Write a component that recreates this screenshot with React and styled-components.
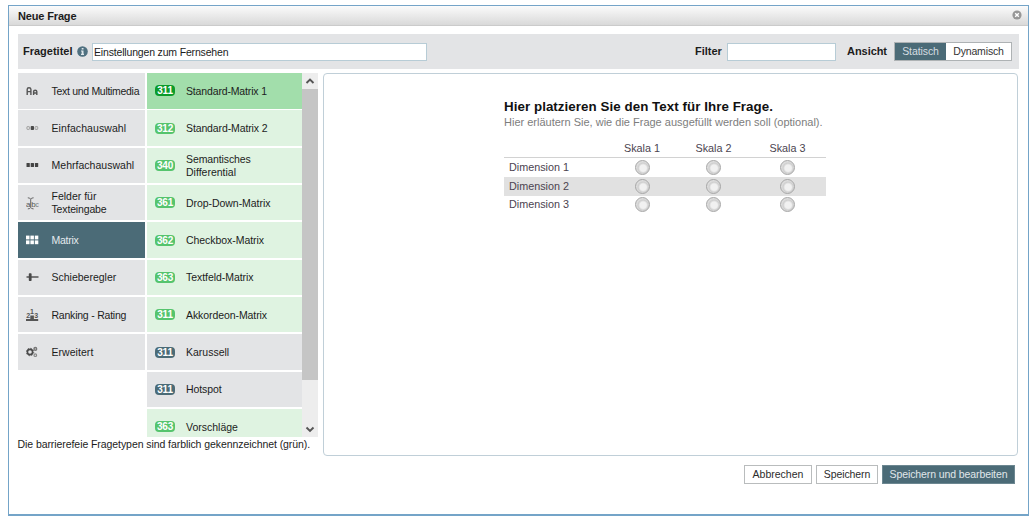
import React from "react";
import styled, { createGlobalStyle } from "styled-components";

const Global = createGlobalStyle`
  * { box-sizing: border-box; }
  body {
    margin: 0;
    background: #fff;
    color: #1c1c1c;
    font: 10.5px/13px "Liberation Sans", Arial, sans-serif;
  }
  button, input { font: inherit; color: inherit; margin: 0; }
`;

const Page = styled.div`
  width: 1036px;
  height: 524px;
  padding: 5px 7px 8px 8px;
`;
const Dialog = styled.section`
  height: 511px;
  border: 1px solid #74a4c8;
  border-bottom-width: 2px;
  background: #fff;
`;
const TitleBar = styled.header`
  height: 20px;
  padding: 0 6px 0 9px;
  display: flex;
  align-items: center;
  justify-content: space-between;
  border-bottom: 1px solid #cbcbcb;
  background: linear-gradient(#fbfbfb, #d9d9d9);
`;
const Title = styled.h1`
  margin: 2px 0 0;
  font-size: 11px;
  line-height: 13px;
  letter-spacing: -0.15px;
`;
const Close = styled.button`
  width: 10px;
  height: 10px;
  margin-bottom: 1px;
  padding: 0;
  border: 0;
  background: none;
  display: flex;
`;
const Body = styled.div`
  padding: 8px 9px 0 9px;
`;
const Toolbar = styled.div`
  height: 35px;
  padding: 0 7px 0 5px;
  display: flex;
  align-items: center;
  background: #e3e4e6;
`;
const FieldLabel = styled.label`
  font-size: 11px;
  font-weight: bold;
  width: ${(p) => p.$w}px;
  margin-left: ${(p) => p.$ml || 0}px;
  letter-spacing: ${(p) => p.$ls || 0}px;
`;
const Field = styled.input`
  width: ${(p) => p.$w}px;
  height: 18px;
  padding: 0 1px;
  border: 1px solid #b7ccd6;
  background: #fff;
  outline: 0;
  letter-spacing: -0.17px;
`;
const Info = styled.svg`
  width: 11px;
  height: 11px;
  margin-right: 4px;
`;
const Toggle = styled.div`
  display: flex;
  height: 19px;
  border: 1px solid #aeb2b4;
`;
const ToggleButton = styled.button`
  width: ${(p) => p.$w}px;
  padding: 0;
  border: 0;
  letter-spacing: ${(p) => p.$ls}px;
  background: ${(p) => (p.$on ? "#4b6b77" : "#fff")};
  color: ${(p) => (p.$on ? "#d5dde1" : "#333")};
`;
const Main = styled.div`
  display: flex;
  margin-top: 4px;
`;
const Browser = styled.div`
  width: 305px;
`;
const Lists = styled.div`
  display: flex;
  height: 364px;
`;
const List = styled.div`
  width: ${(p) => p.$w}px;
  margin-right: ${(p) => p.$mr || 0}px;
  height: 364px;
  overflow: hidden;
`;
const tones = {
  grey: "#e3e4e6",
  dark: "#4b6b77",
  green: "#dff3e1",
  active: "#a2deab",
};
const Item = styled.div`
  height: 35.5px;
  margin-bottom: 1.83px;
  padding-left: 8px;
  display: flex;
  align-items: center;
  background: ${(p) => tones[p.$tone]};
  color: ${(p) => (p.$tone === "dark" ? "#e4eaed" : "#1c1c1c")};
`;
const IconBox = styled.span`
  width: 25.5px;
  height: 14px;
  display: flex;
`;
const Label = styled.span`
  white-space: nowrap;
  padding-top: 1px;
`;
const Line = styled.span`
  display: block;
  letter-spacing: ${(p) => p.$ls}px;
`;
const Badge = styled.span`
  width: 20px;
  height: 11px;
  margin-right: 11px;
  border-radius: 4px;
  background: ${(p) => p.$c};
  color: #fff;
  font-size: 10px;
  font-weight: bold;
  line-height: 11px;
  letter-spacing: -0.2px;
  text-align: center;
`;
const Scrollbar = styled.div`
  width: 16px;
  height: 364px;
  display: flex;
  flex-direction: column;
  justify-content: space-between;
  background: #ededed;
`;
const Arrow = styled.svg`
  width: 16px;
  height: 16px;
  display: block;
`;
const Thumb = styled.div`
  height: 291px;
  margin-bottom: 41px;
  background: #c5c5c5;
`;
const Note = styled.p`
  margin: 1px 0 0 -0.5px;
  white-space: nowrap;
  letter-spacing: -0.07px;
`;
const Preview = styled.section`
  width: 695px;
  height: 383px;
  padding: 25px 0 0 180px;
  border: 1px solid #c0cfd8;
  border-radius: 4px;
`;
const Question = styled.h2`
  margin: 0;
  font-size: 13.33px;
  line-height: 16px;
  letter-spacing: 0.06px;
  color: #111;
  white-space: nowrap;
`;
const Hint = styled.p`
  margin: 0;
  font-size: 11px;
  line-height: 14px;
  color: #7d7d7d;
  white-space: nowrap;
`;
const Grid = styled.div`
  margin-top: 11px;
  width: 322px;
  font-size: 10.8px;
  color: #4b4450;
`;
const GridRow = styled.div`
  display: grid;
  grid-template-columns: 102px 72px 71px 77px;
  align-items: center;
  justify-items: center;
  height: ${(p) => (p.$head ? 18.4 : 18.6)}px;
  border-bottom: ${(p) => (p.$head ? "1px solid #d2d2d2" : "0")};
  background: ${(p) => (p.$shade ? "#e1e1e1" : "none")};
`;
const RowName = styled.span`
  justify-self: start;
  padding-left: 5px;
`;
const Radio = styled.span`
  width: 15px;
  height: 15px;
  border: 1px solid #a6a6a6;
  border-radius: 50%;
  background: radial-gradient(circle at 55% 55%, #f1f1f1 0 3.2px, #cfcfcf 5px, #dedede 6.5px);
`;
const Footer = styled.footer`
  display: flex;
  justify-content: flex-end;
  gap: 4px;
  margin: 9px 4px 0 0;
`;
const Button = styled.button`
  width: ${(p) => p.$w}px;
  height: 19px;
  padding: 0;
  font-size: 10.5px;
  white-space: nowrap;
  letter-spacing: ${(p) => p.$ls || 0}px;
  border: 1px solid ${(p) => (p.$primary ? "#6c8791" : "#b9bcbd")};
  background: ${(p) => (p.$primary ? "#4b6b77" : "#fff")};
  color: ${(p) => (p.$primary ? "#e0e7ea" : "#2b2b2b")};
`;

const iconFont = { fontFamily: "Liberation Sans", fontWeight: "bold" };

const icons = {
  text: (
    <svg width="14" height="14" fill="none" stroke="#555" strokeWidth="1.4">
      <path d="M1.2 11V5.2Q1.2 3.7 3 3.7T4.9 5.2V11M1.2 7.6h3.7" />
      <path d="M7.6 11V7.6Q7.6 6.3 9.2 6.3T10.8 7.6V11M7.6 9h3.2" />
    </svg>
  ),
  single: (
    <svg width="14" height="14">
      <g fill="#d8d8d8" stroke="#999" strokeWidth="0.9">
        <rect x="0.9" y="5.5" width="2.6" height="3" rx="0.8" />
        <rect x="9.1" y="5.5" width="2.6" height="3" rx="0.8" />
      </g>
      <rect x="4.7" y="5" width="3.3" height="4" rx="0.8" fill="#4a4a4a" />
    </svg>
  ),
  multi: (
    <svg width="14" height="14" fill="#444">
      <rect x="0.5" y="5.1" width="3.3" height="3.8" rx="0.5" />
      <rect x="4.7" y="5.1" width="3.3" height="3.8" rx="0.5" />
      <rect x="8.9" y="5.1" width="3.3" height="3.8" rx="0.5" />
    </svg>
  ),
  field: (
    <svg width="14" height="14" fill="#555" fontFamily="Liberation Sans">
      <text x="0" y="10.5" fontSize="8">a</text>
      <text x="5.2" y="10.5" fontSize="8">b</text>
      <text x="9.4" y="10.5" fontSize="6.5" fill="#777">c</text>
      <path
        d="M1.8 1.8q2.4 0 2.9 1.4Q5.2 1.8 7.6 1.8M4.7 3.2v8.2M1.8 12.9q2.4 0 2.9-1.4q.5 1.4 2.9 1.4"
        stroke="#666"
        fill="none"
        strokeWidth="1"
      />
    </svg>
  ),
  matrix: (
    <svg width="14" height="14" fill="#fff">
      {[0, 4.4, 8.8].map((x) =>
        [2.6, 7.4].map((y) => <rect key={x + "-" + y} x={x} y={y} width="3.5" height="3.8" />)
      )}
    </svg>
  ),
  slider: (
    <svg width="14" height="14">
      <path d="M0.5 7h12" stroke="#555" strokeWidth="1.5" />
      <rect x="2.8" y="3.2" width="2.8" height="7.8" rx="0.8" fill="#484848" />
    </svg>
  ),
  ranking: (
    <svg width="14" height="14" fill="#555" {...iconFont}>
      <path d="M0 10.9h4.3V7.6h3.6v3.3h4.3V13H0z" fill="#555" />
      <text x="0.2" y="10" fontSize="7">2</text>
      <text x="4" y="6.4" fontSize="7">1</text>
      <text x="8.3" y="10" fontSize="7">3</text>
    </svg>
  ),
  gears: (
    <svg width="14" height="14" fill="none" stroke="#4a4a4a">
      <circle cx="4" cy="7" r="2.6" strokeWidth="1.6" />
      <circle cx="4" cy="7" r="3.7" strokeWidth="0.9" strokeDasharray="1.4 1.5" />
      <circle cx="9.3" cy="3.9" r="1.3" strokeWidth="1.5" stroke="#777" />
      <circle cx="9.3" cy="10.2" r="1.3" strokeWidth="1.2" stroke="#888" />
    </svg>
  ),
};

const categories = [
  ["text", [["Text und Multimedia", -0.3]]],
  ["single", [["Einfachauswahl", 0.08]]],
  ["multi", [["Mehrfachauswahl", 0.02]]],
  ["field", [["Felder für", 0], ["Texteingabe", -0.15]]],
  ["matrix", [["Matrix", -0.25]]],
  ["slider", [["Schieberegler", 0]]],
  ["ranking", [["Ranking - Rating", -0.22]]],
  ["gears", [["Erweitert", 0.05]]],
];
const types = [
  [311, "active", [["Standard-Matrix 1", -0.15]]],
  [312, "green", [["Standard-Matrix 2", -0.12]]],
  [340, "green", [["Semantisches", -0.1], ["Differential", 0]]],
  [361, "green", [["Drop-Down-Matrix", -0.05]]],
  [362, "green", [["Checkbox-Matrix", -0.05]]],
  [363, "green", [["Textfeld-Matrix", -0.05]]],
  [311, "green", [["Akkordeon-Matrix", -0.08]]],
  [311, "grey", [["Karussell", 0]]],
  [311, "grey", [["Hotspot", -0.1]]],
  [363, "green", [["Vorschläge", 0]]],
];
const badgeColors = { active: "#0b9b2b", green: "#55c46d", grey: "#4b6b77" };

const Lines = ({ lines }) => (
  <Label>
    {lines.map(([t, ls]) => (
      <Line key={t} $ls={ls}>{t}</Line>
    ))}
  </Label>
);

export default function App() {
  return (
    <Page>
      <Global />
      <Dialog>
        <TitleBar>
          <Title>Neue Frage</Title>
          <Close aria-label="Schließen">
            <svg width="10" height="10">
              <circle cx="5" cy="5" r="4.6" fill="#979797" />
              <path d="M3.2 3.2l3.6 3.6M6.8 3.2L3.2 6.8" stroke="#fff" strokeWidth="1.4" />
            </svg>
          </Close>
        </TitleBar>
        <Body>
          <Toolbar>
            <FieldLabel $w={54}>Fragetitel</FieldLabel>
            <Info viewBox="0 0 11 11">
              <circle cx="5.5" cy="5.5" r="5.3" fill="#4f7080" />
              <path d="M4.7 2h1.8v1.5H4.7zM4 4.4h2.5v3.4H7V9H4V7.8h.7V5.5H4z" fill="#dfe7eb" />
            </Info>
            <Field $w={335} defaultValue="Einstellungen zum Fernsehen" />
            <FieldLabel $w={32} $ml={268}>Filter</FieldLabel>
            <Field $w={109} />
            <FieldLabel $w={47} $ml={11} $ls={-0.05}>Ansicht</FieldLabel>
            <Toggle>
              <ToggleButton $w={51} $on $ls={-0.1}>Statisch</ToggleButton>
              <ToggleButton $w={65} $ls={-0.15}>Dynamisch</ToggleButton>
            </Toggle>
          </Toolbar>
          <Main>
            <Browser>
              <Lists>
                <List $w={127} $mr={2}>
                  {categories.map(([icon, lines]) => (
                    <Item key={icon} $tone={icon === "matrix" ? "dark" : "grey"}>
                      <IconBox>{icons[icon]}</IconBox>
                      <Lines lines={lines} />
                    </Item>
                  ))}
                </List>
                <List $w={155}>
                  {types.map(([no, tone, lines]) => (
                    <Item key={lines[0][0]} $tone={tone}>
                      <Badge $c={badgeColors[tone]}>{no}</Badge>
                      <Lines lines={lines} />
                    </Item>
                  ))}
                </List>
                <Scrollbar>
                  <Arrow><path d="M4.5 10L8 6.5l3.5 3.5" fill="none" stroke="#555" strokeWidth="1.9" /></Arrow>
                  <Thumb />
                  <Arrow><path d="M4.5 6.5L8 10l3.5-3.5" fill="none" stroke="#555" strokeWidth="1.9" /></Arrow>
                </Scrollbar>
              </Lists>
              <Note>Die barrierefeie Fragetypen sind farblich gekennzeichnet (grün).</Note>
            </Browser>
            <Preview>
              <Question>Hier platzieren Sie den Text für Ihre Frage.</Question>
              <Hint>Hier erläutern Sie, wie die Frage ausgefüllt werden soll (optional).</Hint>
              <Grid>
                <GridRow $head>
                  <span />
                  <span>Skala 1</span>
                  <span>Skala 2</span>
                  <span>Skala 3</span>
                </GridRow>
                {[1, 2, 3].map((n) => (
                  <GridRow key={n} $shade={n === 2}>
                    <RowName>Dimension {n}</RowName>
                    <Radio />
                    <Radio />
                    <Radio />
                  </GridRow>
                ))}
              </Grid>
            </Preview>
          </Main>
          <Footer>
            <Button $w={68}>Abbrechen</Button>
            <Button $w={62} $ls={-0.1}>Speichern</Button>
            <Button $w={133} $primary $ls={-0.1}>Speichern und bearbeiten</Button>
          </Footer>
        </Body>
      </Dialog>
    </Page>
  );
}
